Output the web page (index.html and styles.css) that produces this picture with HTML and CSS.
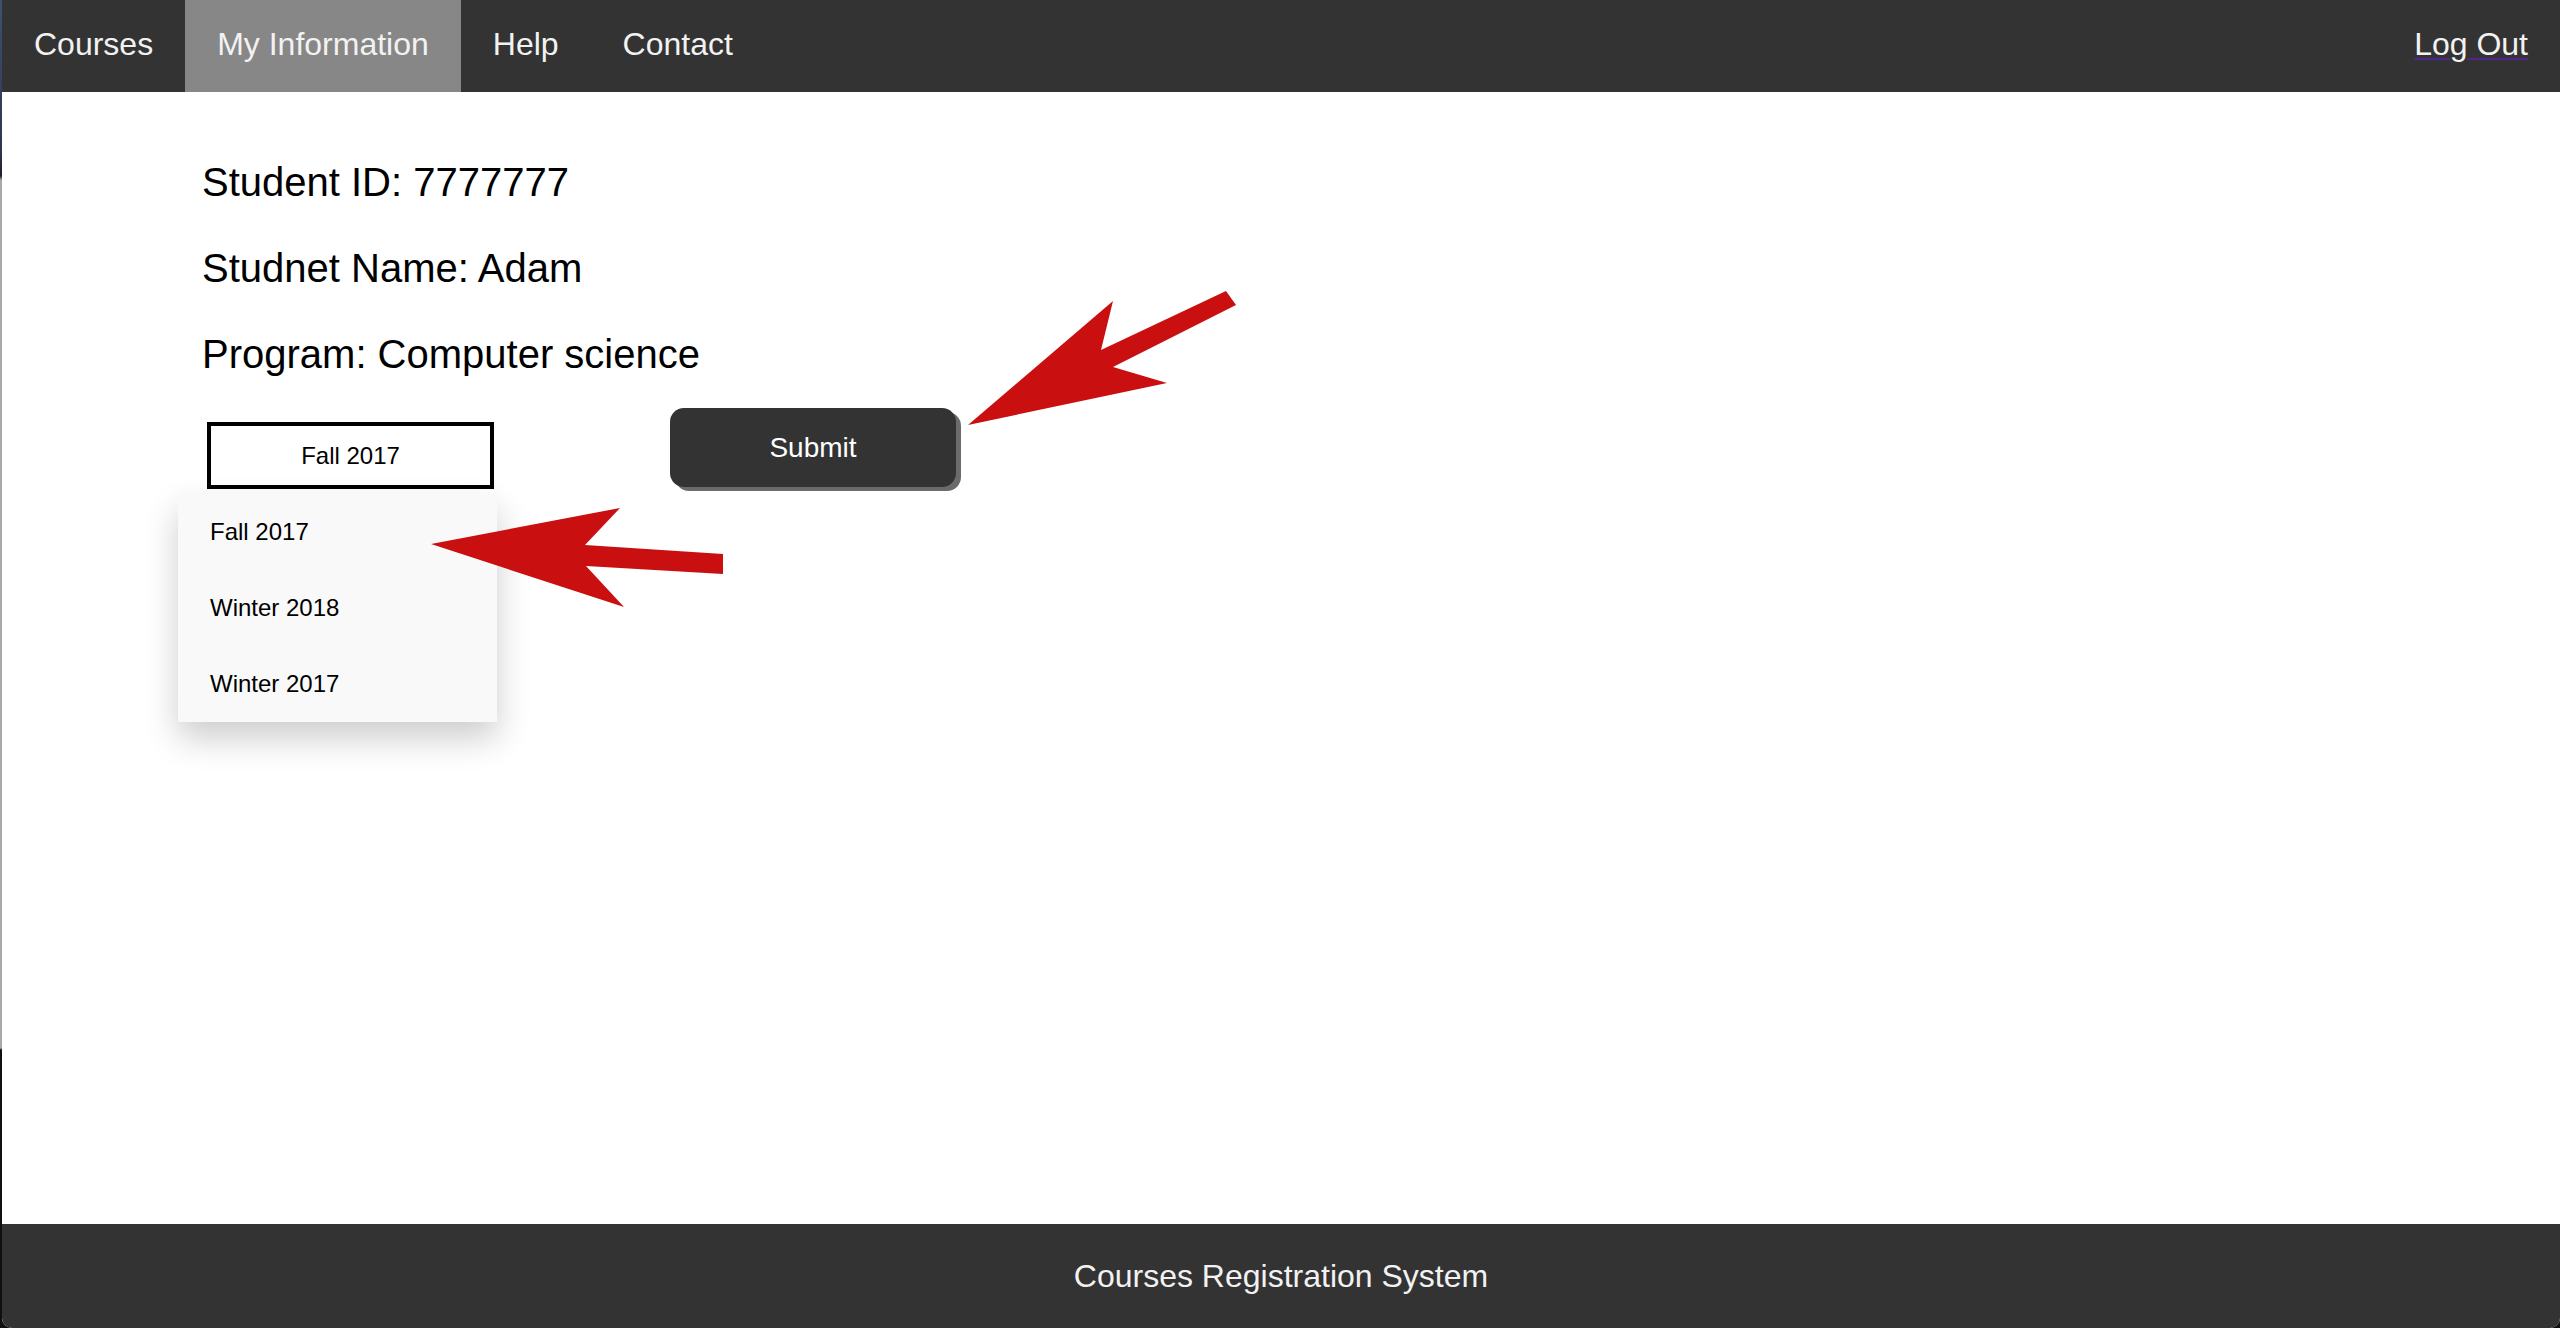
FILE: index.html
```html
<!DOCTYPE html>
<html lang="en">
<head>
<meta charset="utf-8">
<title>Courses Registration System</title>
<link rel="stylesheet" href="styles.css">
</head>
<body>
<div class="screen">
  <div class="edge"></div>
  <div class="page">
    <nav class="topnav">
      <a class="nav-link" href="#">Courses</a>
      <a class="nav-link active" href="#">My Information</a>
      <a class="nav-link" href="#">Help</a>
      <a class="nav-link" href="#">Contact</a>
      <a class="nav-link logout" href="#">Log Out</a>
    </nav>
    <main class="content">
      <p class="info">Student ID: 7777777</p>
      <p class="info">Studnet Name: Adam</p>
      <p class="info">Program: Computer science</p>
      <div class="term-row">
        <div class="dropdown">
          <div class="select">Fall 2017</div>
          <div class="dropdown-menu">
            <a class="dropdown-item" href="#">Fall 2017</a>
            <a class="dropdown-item" href="#">Winter 2018</a>
            <a class="dropdown-item" href="#">Winter 2017</a>
          </div>
        </div>
        <button class="submit" type="button">Submit</button>
      </div>
    </main>
    <footer class="footer">Courses Registration System</footer>
  </div>
  <svg class="annotations" width="2560" height="1328" viewBox="0 0 2560 1328" aria-hidden="true">
    <polygon class="arrow" points="968,425 1113,301 1101,350 1226,291 1236,305 1113,367 1167,383"/>
    <polygon class="arrow" points="431,544 620,508 585,545 723,554 723,574 586,566 624,607"/>
  </svg>
</div>
</body>
</html>
```

FILE: styles.css
```css
* {
  box-sizing: border-box;
}

html, body {
  margin: 0;
  padding: 0;
  background: #0d120d;
}

body {
  font-family: "Liberation Sans", Arial, sans-serif;
}

.screen {
  position: relative;
  display: flex;
  width: 2560px;
  height: 1328px;
  overflow: hidden;
}

.edge {
  width: 2px;
  flex: 0 0 2px;
  background: linear-gradient(to bottom, #3d5272 0, #2e3550 150px, #2a1c2a 176px, #a9a9a9 180px, #a9a9a9 1048px, #0d120d 1050px);
}

.page {
  flex: 1;
  display: flex;
  flex-direction: column;
  background: #ffffff;
  border-bottom-left-radius: 10px;
  border-bottom-right-radius: 10px;
  overflow: hidden;
}

.topnav {
  display: flex;
  height: 92px;
  background: #333333;
}

.nav-link {
  display: block;
  padding: 26px 32px 30px;
  font-size: 32px;
  line-height: 36px;
  color: #f2f2f2;
  text-decoration: none;
}

.nav-link.active {
  background: #878787;
}

.nav-link.logout {
  margin-left: auto;
  padding-right: 32px;
  text-decoration: underline;
  text-decoration-color: #4f2590;
  text-decoration-thickness: 2px;
  text-underline-offset: 3px;
}

.content {
  flex: 1;
  padding: 27px 0 0 200px;
}

.info {
  margin: 40px 0 0;
  font-size: 40px;
  line-height: 46px;
  color: #000000;
}

.term-row {
  display: flex;
  align-items: flex-start;
  margin-top: 31px;
}

.dropdown {
  position: relative;
  margin-top: 14px;
  margin-left: 5px;
}

.select {
  width: 287px;
  height: 67px;
  border: 4px solid #000000;
  display: flex;
  align-items: center;
  justify-content: center;
  font-size: 24px;
  color: #000000;
  background: #ffffff;
}

.dropdown-menu {
  position: absolute;
  top: 72px;
  left: -29px;
  width: 319px;
  background: #f9f9f9;
  box-shadow: 0 16px 32px rgba(0, 0, 0, 0.2);
  z-index: 2;
}

.dropdown-item {
  display: block;
  padding: 24px 32px 24px;
  font-size: 24px;
  line-height: 28px;
  color: #000000;
  text-decoration: none;
}

.submit {
  margin-left: 176px;
  width: 286px;
  height: 79px;
  border: none;
  border-radius: 14px;
  background: #333333;
  box-shadow: 5px 4px 0 #6b6b6b;
  color: #ffffff;
  font-family: "Liberation Sans", Arial, sans-serif;
  font-size: 28px;
  padding: 0;
}

.footer {
  height: 104px;
  display: flex;
  align-items: center;
  justify-content: center;
  background: #333333;
  color: #f2f2f2;
  font-size: 32px;
}

.annotations {
  position: absolute;
  top: 0;
  left: 0;
  pointer-events: none;
  z-index: 5;
}

.arrow {
  fill: #c90f10;
}
```
